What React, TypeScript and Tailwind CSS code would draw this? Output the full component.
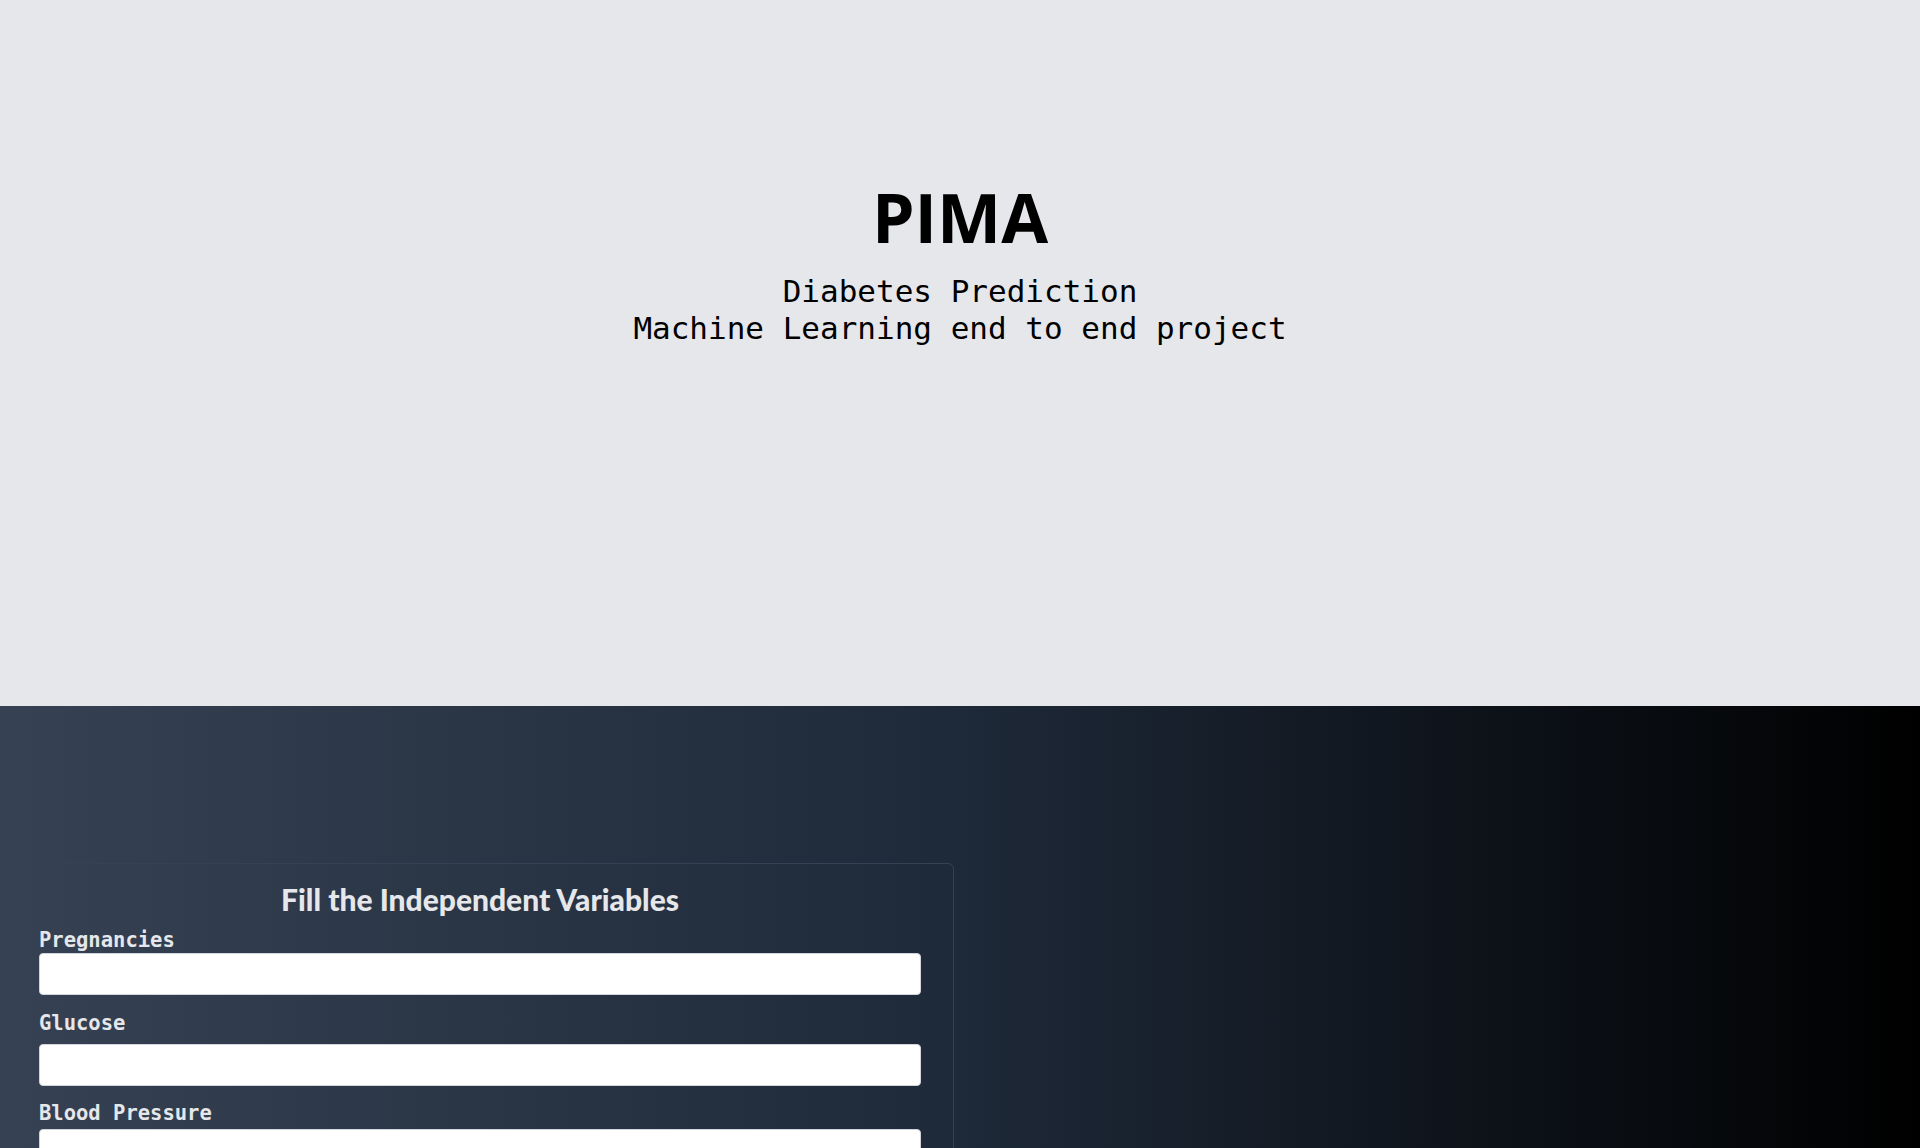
import React from 'react';

const mono = { fontFamily: '"DejaVu Sans Mono", "Liberation Mono", monospace' };

const fields = [
  { name: 'Pregnancies', label: 'mt-[13px] mb-px' },
  { name: 'Glucose', label: 'mt-4 mb-[9px]' },
  { name: 'Blood Pressure', label: 'mt-[15px] mb-1' },
  { name: 'Skin Thickness', label: 'mt-4 mb-2' },
  { name: 'Insulin', label: 'mt-4 mb-2' },
  { name: 'BMI', label: 'mt-4 mb-2' },
  { name: 'Diabetes Pedigree Function', label: 'mt-4 mb-2' },
  { name: 'Age', label: 'mt-4 mb-2' },
];

export default function App() {
  return (
    <div className="min-h-screen flex flex-col">
      <header className="h-[706px] bg-gray-200 flex flex-col items-center pt-[183px] text-black">
        <h1 className="text-[68px] leading-none font-bold font-['Open_Sans',sans-serif]">PIMA</h1>
        <p className="mt-[22px] text-[31px] leading-[37px] text-center" style={mono}>
          Diabetes Prediction
          <br />
          Machine Learning end to end project
        </p>
      </header>

      <main className="flex-1 bg-linear-to-r/srgb from-gray-700 via-gray-800 to-black pt-[157px] pb-16">
        <div className="grid grid-cols-2">
          <form className="mx-[6px] border border-gray-700 rounded-md px-8 pt-[19px] pb-8">
            <h2 className="text-center text-[30px] leading-[32px] font-black text-gray-200 font-['Lato',sans-serif]">
              Fill the Independent Variables
            </h2>
            {fields.map(f => (
              <div key={f.name}>
                <label className={`block text-[20.5px] leading-6 font-bold text-gray-200 ${f.label}`} style={mono}>
                  {f.name}
                </label>
                <input
                  type="text"
                  className="block w-full h-[42px] bg-white rounded border border-gray-300 px-3 text-gray-900"
                />
              </div>
            ))}
            <button
              type="button"
              className="mt-6 w-full h-11 rounded bg-gray-200 text-gray-900 font-bold text-lg"
              style={mono}
            >
              Predict
            </button>
          </form>
          <div />
        </div>
      </main>
    </div>
  );
}
